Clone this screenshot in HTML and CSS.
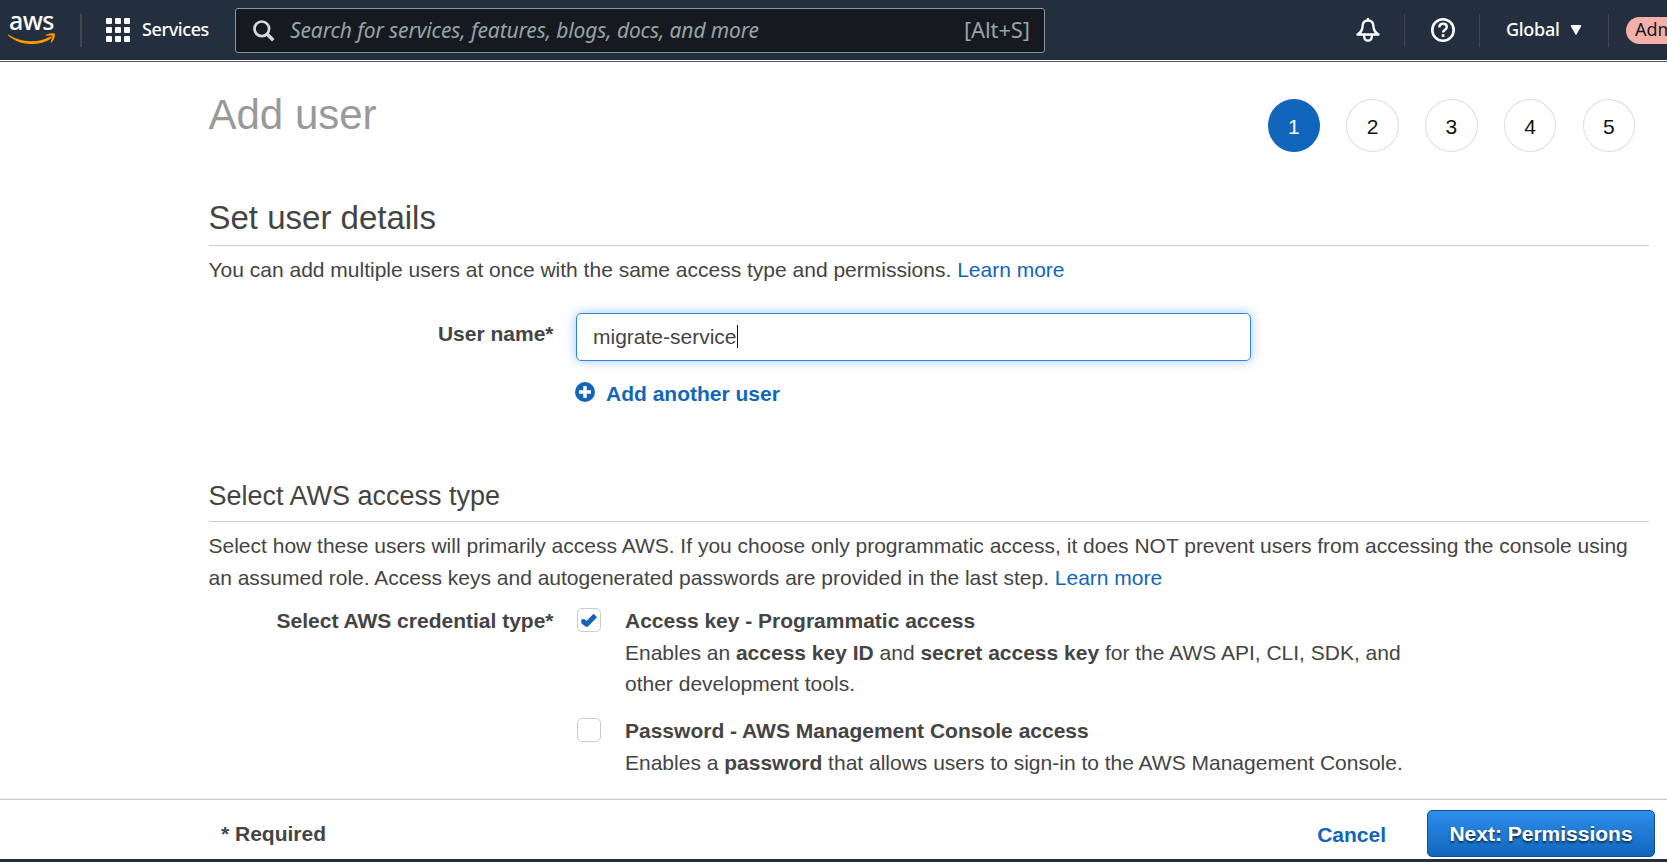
FILE: index.html
```html
<!DOCTYPE html>
<html lang="en">
<head>
<meta charset="utf-8">
<title>Add user</title>
<link rel="stylesheet" href="styles.css">
</head>
<body>
<header class="topbar">
  <div class="logo">
    <span class="logo-text">aws</span>
    <svg class="smile" width="48" height="13" viewBox="0 0 48 13"><path d="M.5 1.5C12 9.500 29 10.500 42 3.700c1.400-.6 2.300.7 1 1.700C31 14 11 12.500.2 2.400c-.5-.7-.3-1.200.3-.9z" fill="#f90"/><path d="M37.500 2.100c3-2.200 8.500-2.300 9.200-1.300.8 1.200-.4 6.300-3.200 8.600-.6.400-1 .1-.8-.5.7-1.700 2.100-5.200 1.400-6-.7-.8-4.300-.4-6-.2-.7 0-.9-.3-.6-.6z" fill="#f90"/></svg>
  </div>
  <span class="sep sep-wide"></span>
  <svg class="grid" width="24" height="24" viewBox="0 0 24 24" fill="#fff"><rect width="6" height="6" rx="1"/><rect x="9" width="6" height="6" rx="1"/><rect x="18" width="6" height="6" rx="1"/><rect y="9" width="6" height="6" rx="1"/><rect x="9" y="9" width="6" height="6" rx="1"/><rect x="18" y="9" width="6" height="6" rx="1"/><rect y="18" width="6" height="6" rx="1"/><rect x="9" y="18" width="6" height="6" rx="1"/><rect x="18" y="18" width="6" height="6" rx="1"/></svg>
  <span class="services">Services</span>
  <div class="search">
    <svg width="22" height="22" viewBox="0 0 22 22" fill="none" stroke="#d5dbdb" stroke-width="2.700"><circle cx="8.800" cy="8.800" r="7.300"/><path d="M14 14l6.300 6.300" stroke-width="3.400"/></svg>
    <span class="hint">Search for services, features, blogs, docs, and more</span>
    <span class="shortcut">[Alt+S]</span>
  </div>
  <div class="tools">
    <svg class="bell" width="24" height="24" viewBox="0 0 24 24" fill="none" stroke="#fff" stroke-width="2.300" stroke-linejoin="round"><path d="M12 0v3M12 2.500c-3.700 0-5.300 2.700-5.400 5.600-.1 4.200-1.600 6.400-5.200 8.400h21.200c-3.600-2-5.100-4.200-5.200-8.400-.1-2.900-1.700-5.600-5.400-5.600zM8 17c0 3.500 1.300 5.700 4 5.700s4-2.200 4-5.700"/></svg>
    <span class="sep"></span>
    <svg class="help" width="24" height="24" viewBox="0 0 24 24" fill="none" stroke="#fff"><circle cx="12" cy="12" r="10.700" stroke-width="2.600"/><path d="M8.300 9.400c0-2.300 1.500-3.700 3.800-3.700s3.700 1.300 3.700 3.200c0 3-3.700 2.600-3.700 5.700" stroke-width="2.400"/><path d="M12.100 16.200v2.700" stroke-width="2.600"/></svg>
    <span class="sep"></span>
    <span class="region">Global</span>
    <svg class="caret" width="12" height="10" viewBox="0 0 12 10"><path d="M1 .5h10L6 9.500z" fill="#fff" stroke="#fff" stroke-linejoin="round"/></svg>
    <span class="sep"></span>
    <span class="account">Adm</span>
  </div>
</header>
<main class="page">
  <div class="title-row">
    <h1>Add user</h1>
    <ol class="steps"><li class="active">1</li><li>2</li><li>3</li><li>4</li><li>5</li></ol>
  </div>
  <section class="details">
    <h2>Set user details</h2>
    <p class="intro">You can add multiple users at once with the same access type and permissions. <a>Learn more</a></p>
    <div class="field">
      <label class="name-label">User name*</label>
      <div class="control">
        <div class="input"><span>migrate-service</span><i class="cursor"></i></div>
        <a class="add"><svg width="20" height="20" viewBox="0 0 20 20"><circle cx="10" cy="10" r="10" fill="#1166bb"/><path d="M10 4v12M4 10h12" stroke="#fff" stroke-width="3.400"/></svg><span>Add another user</span></a>
      </div>
    </div>
  </section>
  <section class="access">
    <h3>Select AWS access type</h3>
    <p class="access-copy"><span class="line">Select how these users will primarily access AWS. If you choose only programmatic access, it does NOT prevent users from accessing the console using</span><span class="line">an assumed role. Access keys and autogenerated passwords are provided in the last step. <a>Learn more</a></span></p>
    <div class="field types">
      <label class="type-label">Select AWS credential type*</label>
      <div class="options">
        <div class="option">
          <span class="box"><svg width="18" height="16" viewBox="0 0 18 16"><path d="M3 9.200l3.700 3L15.300 3.400" fill="none" stroke="#1166bb" stroke-width="5" stroke-linejoin="round"/><circle cx="3.300" cy="9.300" r="2.200" fill="#1166bb"/></svg></span>
          <div class="copy"><b>Access key - Programmatic access</b><span>Enables an <b>access key ID</b> and <b>secret access key</b> for the AWS API, CLI, SDK, and</span><span>other development tools.</span></div>
        </div>
        <div class="option">
          <span class="box"></span>
          <div class="copy"><b>Password - AWS Management Console access</b><span>Enables a <b>password</b> that allows users to sign-in to the AWS Management Console.</span></div>
        </div>
      </div>
    </div>
  </section>
</main>
<footer class="actions">
  <span class="required">* Required</span>
  <a class="cancel">Cancel</a>
  <button class="next">Next: Permissions</button>
</footer>
</body>
</html>
```
FILE: styles.css
```css
* { box-sizing: border-box; }
body { margin: 0; width: 1667px; height: 862px; overflow: hidden; display: flex; flex-direction: column; background: #fff; color: #444; font: 21px/31.5px "Liberation Sans", Arial, sans-serif; }
h1, h2, h3, p, ol { margin: 0; padding: 0; font-weight: 400; white-space: nowrap; }
svg { display: block; flex: none; }
a { color: #1166bb; }

.topbar { height: 62px; flex: none; display: flex; align-items: flex-start; background: linear-gradient(#232f3e 60px, #fff 60px, #fff 61px, #545b64 61px); color: #fff; font-family: "Noto Sans", "Open Sans", sans-serif; white-space: nowrap; overflow: hidden; }
.topbar > * { flex: none; }
.logo { width: 72px; padding-left: 8px; height: 60px; }
.logo-text { display: block; margin: 8px 0 0 1px; height: 25px; font: 500 25px/25px "Noto Sans", sans-serif; letter-spacing: -0.6px; }
.sep { width: 1px; height: 33px; margin-top: 14px; background: #414750; flex: none; }
.sep-wide { width: 2px; margin-left: 8px; }
.grid { margin: 18px 0 0 24px; }
.services { margin-left: 12px; width: 93px; line-height: 59px; font-size: 18px; font-weight: 500; letter-spacing: -0.4px; }
.search { width: 810px; height: 45px; margin-top: 8px; padding: 0 14px 0 17px; display: flex; align-items: center; border: 1px solid #879596; border-radius: 3px; background: #16191f; color: #95a5a6; font-size: 21px; }
.hint { margin-left: 15px; font-style: italic; letter-spacing: -0.12px; }
.shortcut { margin: 0 0 1px auto; font-size: 22px; letter-spacing: -0.1px; }
.tools { display: flex; margin-left: 311px; }
.bell { margin: 18px 24px 0 0; }
.help { margin: 18px 24px 0 26px; }
.region { margin-left: 26px; width: 64px; line-height: 59px; font-size: 18px; font-weight: 500; letter-spacing: -0.3px; }
.caret { margin: 25px 26px 0 0; }
.account { margin: 17px 0 0 17px; height: 27px; width: 80px; padding-left: 9px; border-radius: 14px; background: #f2b0a9; color: #16191f; font-size: 18px; line-height: 25px; }

.page { height: 736px; flex: none; padding: 0 18px 0 208.5px; }
.title-row { height: 130px; display: flex; justify-content: space-between; }
h1 { margin-top: 30px; font-size: 42px; line-height: 46px; color: #999; }
.steps { margin: 37px 14px 0 0; display: flex; gap: 26.25px; list-style: none; }
.steps li { width: 52.5px; height: 53px; border: 1px solid #ddd; border-radius: 50%; text-align: center; line-height: 54px; color: #111; }
.steps .active { background: #1166bb; border-color: #1166bb; color: #fff; }
.details { height: 278px; }
h2 { height: 54px; padding-top: 7px; border-bottom: 1px solid #ccc; font-size: 33px; line-height: 38px; }
.intro { padding-top: 8px; }
.field { display: flex; }
.details .field { margin-top: 27px; }
.name-label, .type-label { width: 345px; margin-right: 22.5px; text-align: right; font-weight: 700; white-space: nowrap; flex: none; }
.name-label { padding-top: 5px; }
.input { width: 675px; height: 48px; padding-left: 16px; display: flex; align-items: center; border: 1px solid #2d85dd; border-radius: 5px; box-shadow: 0 0 12px rgba(45, 133, 221, .45); }
.cursor { width: 1px; height: 23px; background: #111; }
.add { display: flex; margin-top: 17px; font-weight: 700; }
.add svg { margin: 4px 11px 0 -1px; }
h3 { height: 52px; padding-top: 9px; border-bottom: 1px solid #ccc; font-size: 27px; line-height: 34px; }
.access-copy { padding-top: 8px; }
.line { display: block; }
.types { padding-top: 12px; }
.option { display: flex; height: 110px; }
.box { width: 24px; height: 24px; margin: 3px 24px 0 1px; border: 1px solid #ccc; border-radius: 5px; display: flex; align-items: center; justify-content: center; flex: none; }
.copy { display: flex; flex-direction: column; white-space: nowrap; }
.copy > * { display: block; width: max-content; }

.actions { height: 64px; flex: none; display: flex; align-items: flex-start; border-bottom: 3px solid #232f3e; background: linear-gradient(#eaeaea 1px, #ccc 1px, #ccc 2px, #fff 2px); padding: 0 12px 0 221px; font-weight: 700; white-space: nowrap; }
.required { margin-top: 20px; }
.cancel { margin: 21px 41px 0 auto; }
.next { width: 228px; height: 47px; margin-top: 12px; padding: 0; border: 1px solid #14507f; border-radius: 5px; background: linear-gradient(#2e8ded, #1166bb); color: #fff; font: 700 21px/45px "Liberation Sans", Arial, sans-serif; text-shadow: 0 2px 2px #103050; }
```
